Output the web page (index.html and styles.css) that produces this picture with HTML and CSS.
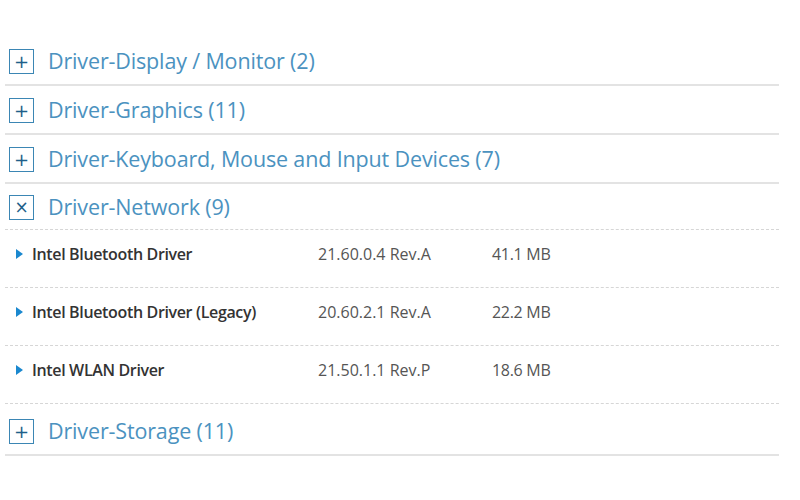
FILE: index.html
```html
<!DOCTYPE html>
<html>
<head>
<meta charset="utf-8">
<link rel="stylesheet" href="styles.css">
</head>
<body>
<div class="list">
  <div class="cat">
    <span class="box">+</span>
    <span class="cat-title">Driver-Display / Monitor (2)</span>
  </div>
  <div class="cat">
    <span class="box">+</span>
    <span class="cat-title">Driver-Graphics (11)</span>
  </div>
  <div class="cat">
    <span class="box">+</span>
    <span class="cat-title">Driver-Keyboard, Mouse and Input Devices (7)</span>
  </div>
  <div class="cat open">
    <span class="box close">×</span>
    <span class="cat-title">Driver-Network (9)</span>
  </div>
  <div class="item">
    <span class="name"><span class="tri"></span>Intel Bluetooth Driver</span>
    <span class="ver">21.60.0.4 Rev.A</span>
    <span class="size">41.1 MB</span>
  </div>
  <div class="item">
    <span class="name"><span class="tri"></span>Intel Bluetooth Driver (Legacy)</span>
    <span class="ver">20.60.2.1 Rev.A</span>
    <span class="size">22.2 MB</span>
  </div>
  <div class="item">
    <span class="name"><span class="tri"></span>Intel WLAN Driver</span>
    <span class="ver">21.50.1.1 Rev.P</span>
    <span class="size">18.6 MB</span>
  </div>
  <div class="cat last">
    <span class="box">+</span>
    <span class="cat-title">Driver-Storage (11)</span>
  </div>
</div>
</body>
</html>
```
FILE: styles.css
```css
html, body {
  margin: 0;
  padding: 0;
  background: #fff;
}
body {
  font-family: "Open Sans", "Liberation Sans", sans-serif;
}
.list {
  margin: 37px 0 0 5px;
  width: 774px;
}
.cat {
  height: 47px;
  display: flex;
  align-items: center;
  border-bottom: 2px solid #e3e3e3;
  padding-left: 4px;
}
.cat.open {
  border-bottom: 1px dashed #d6d6d6;
  height: 45px;
}
.cat.last {
  height: 47px;
  padding-top: 3px;
}
.box {
  width: 23px;
  height: 23px;
  border: 1.5px solid #3b86b4;
  display: flex;
  align-items: center;
  justify-content: center;
  color: #1f5f8a;
  font-family: "DejaVu Sans", sans-serif;
  font-size: 18px;
  line-height: 1;
  box-sizing: content-box;
  margin-top: 2px;
}
.box.close {
  font-size: 17px;
}
.cat-title {
  margin-left: 14px;
  font-size: 21.5px;
  color: #4b92bf;
  letter-spacing: -0.15px;
}
.item {
  height: 58px;
  display: flex;
  align-items: center;
  border-bottom: 1px dashed #d6d6d6;
  font-size: 16px;
  padding-bottom: 10px;
  box-sizing: border-box;
}
.name {
  width: 313px;
  display: flex;
  align-items: center;
  color: #333;
  font-weight: 600;
  padding-left: 11px;
  box-sizing: border-box;
  letter-spacing: -0.35px;
}
.tri {
  width: 0;
  height: 0;
  border-top: 5px solid transparent;
  border-bottom: 5px solid transparent;
  border-left: 7px solid #1a88cf;
  margin-right: 9px;
}
.ver {
  width: 174px;
  color: #555;
  letter-spacing: 0;
}
.size {
  color: #555;
  letter-spacing: -0.3px;
}
```
